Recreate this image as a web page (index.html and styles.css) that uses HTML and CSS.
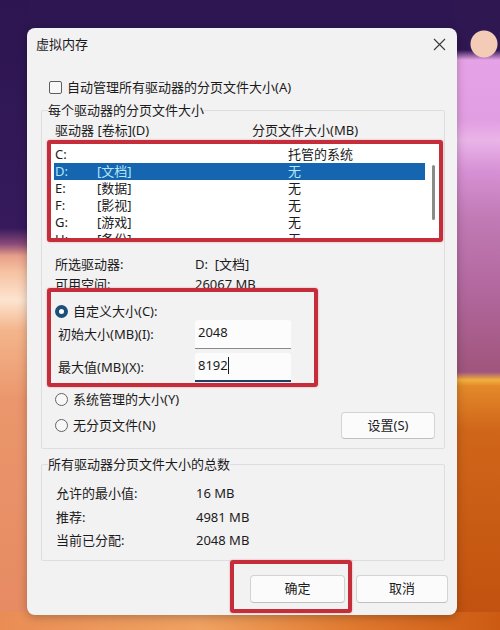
FILE: index.html
```html
<!DOCTYPE html>
<html lang="zh-CN">
<head>
<meta charset="utf-8">
<title>虚拟内存</title>
<link rel="stylesheet" href="styles.css">
</head>
<body>
<div class="dialog">
  <div class="titlebar">
    <span class="title">虚拟内存</span>
    <svg class="close" width="13" height="13" viewBox="0 0 13 13"><path d="M1 1L12 12M12 1L1 12" stroke="#3a3a3a" stroke-width="1.1" fill="none"/></svg>
  </div>

  <div class="check-row"><span class="checkbox"></span><span>自动管理所有驱动器的分页文件大小(A)</span></div>

  <fieldset class="group group-drives">
    <legend>每个驱动器的分页文件大小</legend>
    <div class="list-head"><span>驱动器 [卷标](D)</span><span>分页文件大小(MB)</span></div>
    <div class="drive-list mark">
      <div class="rows">
        <div class="row"><span>C:</span><span></span><span>托管的系统</span></div>
        <div class="row selected"><span>D:</span><span>[文档]</span><span>无</span></div>
        <div class="row"><span>E:</span><span>[数据]</span><span>无</span></div>
        <div class="row"><span>F:</span><span>[影视]</span><span>无</span></div>
        <div class="row"><span>G:</span><span>[游戏]</span><span>无</span></div>
        <div class="row"><span>H:</span><span>[备份]</span><span>无</span></div>
      </div>
      <div class="scroll"><span class="thumb"></span></div>
    </div>
    <div class="info">
      <div class="info-row"><span>所选驱动器:</span><span>D:&nbsp;&nbsp;[文档]</span></div>
      <div class="info-row"><span>可用空间:</span><span>26067 MB</span></div>
    </div>
    <div class="custom mark">
      <div class="radio-row"><span class="radio checked"></span><span>自定义大小(C):</span></div>
      <div class="field-row"><span>初始大小(MB)(I):</span><span class="input">2048</span></div>
      <div class="field-row"><span>最大值(MB)(X):</span><span class="input focused">8192<span class="caret"></span></span></div>
    </div>
    <div class="radio-row plain"><span class="radio"></span><span>系统管理的大小(Y)</span></div>
    <div class="radio-set-row">
      <div class="radio-row plain"><span class="radio"></span><span>无分页文件(N)</span></div>
      <button class="btn btn-set">设置(S)</button>
    </div>
  </fieldset>

  <fieldset class="group group-total">
    <legend>所有驱动器分页文件大小的总数</legend>
    <div class="totals">
      <div class="total-row"><span>允许的最小值:</span><span>16 MB</span></div>
      <div class="total-row"><span>推荐:</span><span>4981 MB</span></div>
      <div class="total-row"><span>当前已分配:</span><span>2048 MB</span></div>
    </div>
  </fieldset>

  <div class="actions">
    <div class="ok-mark mark"><button class="btn btn-ok">确定</button></div>
    <button class="btn btn-cancel">取消</button>
  </div>
</div>
</body>
</html>
```

FILE: styles.css
```css
html, body {
  margin: 0;
  padding: 0;
}

body {
  width: 500px;
  height: 630px;
  overflow: hidden;
  font-family: "Noto Sans", "Noto Sans CJK SC", sans-serif;
  font-size: 13px;
  color: #1b1b1b;
  background:
    linear-gradient(90deg, #e98d55 0%, #f0a262 40%, #e07a30 70%, #cc5a12 100%) 0 612px / 500px 18px no-repeat,
    radial-gradient(circle at 26px 16px, #f3cbb6 0 13px, transparent 14px) 458px 28px / 42px 36px no-repeat,
    linear-gradient(180deg, #2f1752 0, #2f1752 50px, #e6a2e6 60px, #e29ee2 120px, #eab4e8 140px, #d792d6 170px, #c27bb6 215px, #b0659a 300px, #9f557c 372px, #f2b03c 380px, #e3892a 386px, #d0661a 430px, #c0500e 630px) 455px 0 / 45px 630px no-repeat,
    linear-gradient(180deg, #2c1550 0, #361a5c 228px, #8a4a78 244px, #e8a08a 256px, #f6c2a2 272px, #fde4d0 300px, #f4b58c 330px, #eb966c 400px, #e68a62 630px) 0 0 / 30px 630px no-repeat,
    #2e1652;
  display: flex;
  align-items: flex-start;
}

.dialog {
  margin: 28px 0 0 27px;
  width: 430px;
  height: 587px;
  background: #f3f2f3;
  border-radius: 8px;
  box-shadow: 0 2px 10px rgba(0, 0, 0, 0.25);
  display: flex;
  flex-direction: column;
  overflow: hidden;
  line-height: 17px;
}

.titlebar {
  height: 32px;
  display: flex;
  align-items: center;
  justify-content: space-between;
  padding: 0 11px 0 9px;
}

.title {
  font-size: 13px;
}

.close {
  display: block;
}

.check-row {
  margin-top: 19px;
  padding-left: 22px;
  display: flex;
  align-items: center;
  gap: 5px;
  height: 17px;
}

.checkbox {
  width: 11px;
  height: 11px;
  border: 1px solid #5e5e5e;
  border-radius: 2px;
  background: #f7f7f7;
}

.group {
  margin: 0 12px 0 14px;
  padding: 0;
  border: 1px solid #dedddf;
  border-radius: 2px;
  min-width: 0;
}

.group legend {
  padding: 0;
  margin-left: 6px;
  line-height: 17px;
}

.group-drives {
  margin-top: 6px;
  padding-bottom: 9px;
}

.list-head {
  margin-top: 3px;
  padding-left: 13px;
  display: grid;
  grid-template-columns: 197px 1fr;
  height: 17px;
}

.mark {
  border: 4px solid #c52d3a;
  border-radius: 3px;
  box-shadow: 0 0 2px rgba(197, 45, 58, 0.5);
}

.drive-list {
  margin: 1px 1px 0 5px;
  height: 102px;
  box-sizing: border-box;
  background: #ffffff;
  display: grid;
  grid-template-columns: 1fr 14px;
  overflow: hidden;
}

.rows {
  padding: 2px 0 0 3px;
}

.row {
  display: grid;
  grid-template-columns: 42px 191px 1fr;
  padding-left: 1px;
  height: 17px;
  line-height: 17px;
}

.row.selected {
  background: #1565b0;
  color: #b3e6f6;
}

.scroll {
  position: relative;
}

.thumb {
  display: block;
  margin: 21px 0 0 7px;
  width: 3px;
  height: 55px;
  border-radius: 2px;
  background: #8a8a8a;
}

.info {
  margin-top: 12px;
  padding-left: 13px;
}

.info-row {
  display: grid;
  grid-template-columns: 140px 1fr;
  height: 20px;
  line-height: 20px;
}

.custom {
  margin: -6px 0 0 5px;
  width: 271px;
  height: 99px;
  box-sizing: border-box;
  padding: 11px 0 0 4px;
  position: relative;
}

.radio-row {
  display: flex;
  align-items: center;
  gap: 5px;
  height: 17px;
}

.radio {
  width: 11px;
  height: 11px;
  border: 1px solid #646464;
  border-radius: 50%;
  background: #f7f7f7;
  box-sizing: content-box;
}

.radio.checked {
  width: 5px;
  height: 5px;
  border: 4px solid #1d5079;
  background: #ffffff;
}

.field-row {
  display: grid;
  grid-template-columns: 137px 96px;
  align-items: center;
  padding-left: 3px;
  margin-bottom: 4px;
}

.field-row:first-of-type {
  margin-top: 0;
}

.input {
  height: 29px;
  box-sizing: border-box;
  background: #fcfcfc;
  border-bottom: 1px solid #8a8a8a;
  border-radius: 3px 3px 0 0;
  padding: 4px 0 0 3px;
  line-height: 17px;
  display: flex;
  align-items: flex-start;
}

.input.focused {
  border-bottom: 2px solid #1f3f66;
}

.caret {
  display: inline-block;
  width: 1px;
  height: 17px;
  background: #1b1b1b;
}

.radio-row.plain {
  padding-left: 13px;
}

.group-drives > .radio-row.plain {
  margin-top: 4px;
}

.radio-set-row {
  margin-top: 4px;
  display: flex;
  align-items: center;
  justify-content: space-between;
  padding-right: 9px;
}

.radio-set-row .radio-row.plain {
  padding-left: 13px;
}

.btn {
  font: inherit;
  color: #1b1b1b;
  background: #fbfbfb;
  border: 1px solid #d3d3d3;
  border-bottom-color: #c0c0c0;
  border-radius: 4px;
  padding: 0;
  line-height: 17px;
}

.btn-set {
  width: 94px;
  height: 27px;
}

.group-total {
  margin-top: 7px;
  padding-bottom: 7px;
}

.totals {
  padding: 9px 0 0 14px;
}

.total-row {
  display: grid;
  grid-template-columns: 140px 1fr;
  height: 23.5px;
  line-height: 23.5px;
}

.actions {
  margin-top: -1px;
  display: flex;
  justify-content: flex-end;
  align-items: flex-start;
  padding-right: 9px;
}

.ok-mark {
  padding: 11px 3px 6px 16px;
}

.btn-ok {
  display: block;
  width: 95px;
  height: 28px;
}

.btn-cancel {
  margin: 15px 0 0 4px;
  width: 92px;
  height: 28px;
}
```
